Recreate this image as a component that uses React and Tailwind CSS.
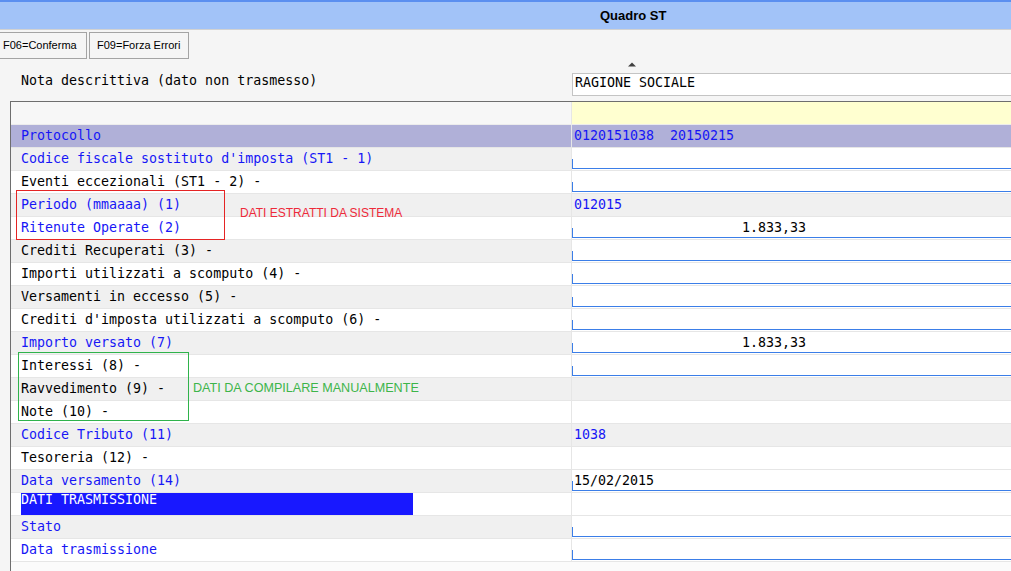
import React from "react";

const rows = [
  { label: "Protocollo", blue: true, value: "0120151038  20150215", valueBlue: true, lav: true },
  { label: "Codice fiscale sostituto d'imposta (ST1 - 1)", blue: true, input: true },
  { label: "Eventi eccezionali (ST1 - 2) -", input: true },
  { label: "Periodo (mmaaaa) (1)", blue: true, value: "012015", valueBlue: true },
  { label: "Ritenute Operate (2)", blue: true, input: true, amount: "1.833,33" },
  { label: "Crediti Recuperati (3) -", input: true },
  { label: "Importi utilizzati a scomputo (4) -", input: true },
  { label: "Versamenti in eccesso (5) -", input: true },
  { label: "Crediti d'imposta utilizzati a scomputo (6) -", input: true },
  { label: "Importo versato (7)", blue: true, input: true, amount: "1.833,33" },
  { label: "Interessi (8) -", input: true },
  { label: "Ravvedimento (9) -" },
  { label: "Note (10) -" },
  { label: "Codice Tributo (11)", blue: true, value: "1038", valueBlue: true },
  { label: "Tesoreria (12) -" },
  { label: "Data versamento (14)", blue: true, input: true, value: "15/02/2015" },
  { label: "DATI TRASMISSIONE", section: true },
  { label: "Stato", blue: true, input: true },
  { label: "Data trasmissione", blue: true, input: true },
];

function Row({ r, i }) {
  const rowBg = r.lav ? "bg-[#b0b0d8]" : i % 2 === 1 ? "bg-[#f0f0f0]" : "bg-white";
  const labelColor = r.blue ? "text-[#1616f6]" : "text-black";
  return (
    <div className={`flex h-[23px] shrink-0 border-b border-[#e6e6e6] ${rowBg}`}>
      <div className="w-[561px] shrink-0 border-r border-[#e6e6e6] flex items-center">
        {r.section ? (
          <div className="ml-[10px] w-[392px] h-[22px] bg-[#1818ff] text-white leading-[14px] whitespace-pre">
            {r.label}
          </div>
        ) : (
          <span className={`pl-[10px] whitespace-pre ${labelColor}`}>{r.label}</span>
        )}
      </div>
      {r.input ? (
        <div className="flex-1 relative bg-white flex items-center after:content-[''] after:absolute after:left-0 after:right-0 after:bottom-[1px] after:h-[10px] after:border-l after:border-b after:border-[#3b7ee8]">
          {r.amount ? (
            <span className="w-[234px] text-right text-black">{r.amount}</span>
          ) : r.value ? (
            <span className="pl-[2px] text-black">{r.value}</span>
          ) : null}
        </div>
      ) : (
        <div className="flex-1 flex items-center">
          {r.value ? (
            <span className={`pl-[2px] whitespace-pre ${r.valueBlue ? "text-[#1616f6]" : "text-black"}`}>{r.value}</span>
          ) : null}
        </div>
      )}
    </div>
  );
}

export default function App() {
  return (
    <div className="w-[1011px] h-[571px] overflow-hidden bg-[#f5f5f5] flex flex-col relative font-['DejaVu_Sans_Mono',monospace] text-[13.3px]">
      {/* title bar */}
      <div className="h-[30px] shrink-0 border-t-2 border-[#5b8ff0] bg-[#a2c3f8] border-b border-b-[#d2d2d2] flex items-center">
        <span className="pl-[600px] font-['Liberation_Sans',Arial,sans-serif] font-bold text-[13px] text-black">
          Quadro ST
        </span>
      </div>
      {/* toolbar */}
      <div className="flex mt-[2px] h-[27px] shrink-0 font-['Liberation_Sans',Arial,sans-serif] text-[11px] text-black">
        <div className="w-[87px] h-full border-t border-r border-b border-[#a4a4a4] flex items-center pl-[3px]">
          F06=Conferma
        </div>
        <div className="ml-[2px] w-[100px] h-full border border-[#a4a4a4] flex items-center pl-[7px]">
          F09=Forza Errori
        </div>
      </div>
      {/* sort indicator */}
      <div className="h-[14px] shrink-0 pl-[628px] pt-[3px]">
        <svg width="8" height="5" viewBox="0 0 8 5">
          <path d="M0 4.5 L4 0.5 L8 4.5 Z" fill="#404040" />
        </svg>
      </div>
      {/* nota descrittiva */}
      <div className="flex h-[23px] shrink-0 mr-[-20px]">
        <div className="w-[572px] shrink-0 pl-[21px] leading-[16px] text-black">
          Nota descrittiva (dato non trasmesso)
        </div>
        <div className="flex-1 h-full bg-white border border-[#c4c4c4] flex items-center pl-[2px] pb-[3px] text-black">
          RAGIONE SOCIALE
        </div>
      </div>
      {/* table */}
      <div className="mt-[5px] ml-[10px] flex-1 border-l border-t border-[#6e6e6e] bg-[#fbfbfb] flex flex-col">
        <div className="flex h-[23px] border-b border-[#ececec] shrink-0">
          <div className="w-[561px] shrink-0 bg-[#f7f7f7] border-r border-[#e6e6e6]" />
          <div className="flex-1 bg-[#ffffd0]" />
        </div>
        {rows.map((r, i) => (
          <Row key={i} r={r} i={i} />
        ))}
      </div>
      {/* annotations */}
      <div className="absolute left-[16px] top-[190px] w-[209px] h-[50px] border border-[#e52424]" />
      <div className="absolute left-[240px] top-[205px] font-['Liberation_Sans',Arial,sans-serif] text-[12px] leading-[16px] text-[#ee2a3a]">
        DATI ESTRATTI DA SISTEMA
      </div>
      <div className="absolute left-[18px] top-[352px] w-[171px] h-[69px] border border-[#2fb34b]" />
      <div className="absolute left-[193px] top-[380px] font-['Liberation_Sans',Arial,sans-serif] text-[12.6px] leading-[16px] text-[#3db54a]">
        DATI DA COMPILARE MANUALMENTE
      </div>
    </div>
  );
}
